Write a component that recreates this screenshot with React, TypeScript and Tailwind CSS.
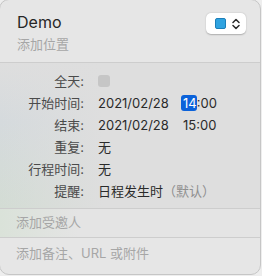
import React from "react";

const font = { fontFamily: 'Inter, "Noto Sans CJK SC", sans-serif' };

function Row({ label, children }: { label: string; children: React.ReactNode }) {
  return (
    <div className="flex h-[22px] items-center">
      <div className="w-[85px] shrink-0 pr-[1px] text-right text-[13px] leading-[22px] text-[#4b4b4b]">{label}</div>
      <div className="ml-[13px] flex items-center text-[13px] leading-[22px] text-[#2a2a2a]">{children}</div>
    </div>
  );
}

export default function App() {
  return (
    <div className="h-[276px] w-[262px] overflow-hidden bg-[#eeeeee]" style={font}>
      <div className="-ml-px -mt-px flex h-[276px] w-[262px] flex-col overflow-hidden rounded-[10px] border border-[#c6c6c6] bg-[#e6e6e6]">
        {/* header */}
        <div className="flex h-[63px] shrink-0 border-b border-[#cdcdcd] pl-[17px] pr-[14px]">
          <div className="flex flex-col">
            <div className="mt-[12px] text-[16px] leading-[20px] text-[#262626]">Demo</div>
            <div className="mt-[3px] text-[13px] leading-[18px] text-[#a6a6a6]">添加位置</div>
          </div>
          <div className="ml-auto mt-[13px] flex h-[21px] w-[40px] items-center rounded-[5px] bg-white pl-[9px] shadow-[0_0.5px_1.5px_rgba(0,0,0,0.25)]">
            <div className="h-[11px] w-[11px] rounded-[2px] border border-[#1c7fb9] bg-[#2fa3e0]" />
            <svg width="8" height="12" viewBox="0 0 8 12" className="ml-[6px]">
              <path d="M1 4.5 L4 1.5 L7 4.5" fill="none" stroke="#2a2a2a" strokeWidth="1.5" strokeLinecap="round" strokeLinejoin="round" />
              <path d="M1 7.5 L4 10.5 L7 7.5" fill="none" stroke="#2a2a2a" strokeWidth="1.5" strokeLinecap="round" strokeLinejoin="round" />
            </svg>
          </div>
        </div>
        {/* details */}
        <div className="flex h-[146px] shrink-0 flex-col border-b border-[#cdcdcd] bg-[linear-gradient(90deg,rgba(222,222,222,0)_0%,#dedede_40%),linear-gradient(180deg,#dedede_0%,#d5dadd_40%,#d3dcd4_100%)] pt-[7px]">
          <Row label="全天:">
            <div className="h-[12px] w-[12px] rounded-[3px] bg-[#c6c6c6]" />
          </Row>
          <Row label="开始时间:">
            <span className="w-[85px]">2021/02/28</span>
            <span className="-ml-[2px] rounded-[3px] bg-[#0b62da] pl-[2px] leading-[16px] text-white">14</span>
            <span>:00</span>
          </Row>
          <Row label="结束:">
            <span className="w-[85px]">2021/02/28</span>
            <span>15:00</span>
          </Row>
          <Row label="重复:">
            <span>无</span>
          </Row>
          <Row label="行程时间:">
            <span>无</span>
          </Row>
          <Row label="提醒:">
            <span>日程发生时</span>
            <span className="text-[#8f8f8f]">（默认）</span>
          </Row>
        </div>
        <div className="flex h-[29px] shrink-0 items-center border-b border-[#cdcdcd] bg-[linear-gradient(90deg,#dae2d9_0%,#e4e4e4_30%)] pl-[16px] text-[13px] text-[#a6a6a6]">
          添加受邀人
        </div>
        <div className="flex flex-1 items-start pl-[16px] pt-[6px] text-[13px] leading-[18px] text-[#a6a6a6]">
          添加备注、URL 或附件
        </div>
      </div>
    </div>
  );
}
